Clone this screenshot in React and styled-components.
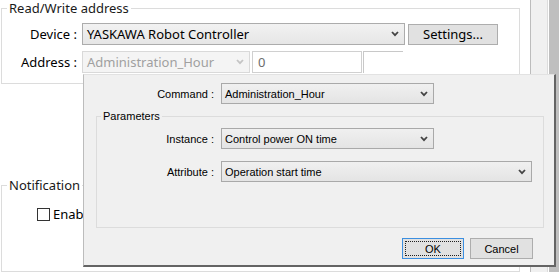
import styled, { createGlobalStyle } from 'styled-components';

const GlobalStyle = createGlobalStyle`
  html, body {
    margin: 0;
    padding: 0;
    background: #ffffff;
  }
  * {
    box-sizing: border-box;
  }
`;

const Screen = styled.div`
  position: relative;
  width: 559px;
  height: 272px;
  overflow: hidden;
  display: flex;
  background: #ffffff;
  font-family: 'Noto Sans', 'Open Sans', sans-serif;
  font-size: 12px;
  color: #000;
`;

const Form = styled.div`
  width: 531px;
  flex: none;
  padding-left: 1px;
  border-right: 1px solid #bcbcbc;
  display: flex;
  flex-direction: column;
`;

const Gutter = styled.div`
  width: 17px;
  flex: none;
  background: #f0f0f0;
  border-right: 1px solid #dcdcdc;
  margin-right: 1px;
`;

const Edge = styled.div`
  flex: 1;
  background: #bfbfbf;
`;

const Group = styled.fieldset`
  margin: ${(p) => p.$top || 0}px 0 0 0;
  width: 519px;
  padding: 0 0 ${(p) => p.$bottom || 0}px 0;
  border: 1px solid #dcdcdc;
  flex: ${(p) => (p.$grow ? 1 : 'none')};
  min-width: 0;
`;

const Legend = styled.legend`
  margin-left: 5px;
  padding: 0 2px;
  font-size: 13px;
  line-height: 16px;
  color: #1a1a1a;
`;

const Rows = styled.div`
  display: flex;
  flex-direction: column;
  gap: 6px;
  padding-top: ${(p) => p.$top}px;
`;

const Row = styled.div`
  display: flex;
  align-items: center;
`;

const Label = styled.div`
  width: ${(p) => p.$w}px;
  flex: none;
  text-align: right;
  font-size: 13px;
  margin-right: 5px;
  white-space: nowrap;
`;

const Combo = styled.div`
  width: ${(p) => p.$w}px;
  height: 22px;
  flex: none;
  display: flex;
  align-items: center;
  justify-content: space-between;
  padding: 0 5px 0 4px;
  border: 1px solid ${(p) => (p.$disabled ? '#d9d9d9' : '#acacac')};
  background: ${(p) =>
    p.$disabled ? '#f4f4f4' : 'linear-gradient(#f2f2f2, #e6e6e6)'};
  color: ${(p) => (p.$disabled ? '#a0a0a0' : '#000')};
  font-size: 13px;
  white-space: nowrap;
`;

const Input = styled.div`
  width: ${(p) => p.$w}px;
  height: 22px;
  flex: none;
  display: flex;
  align-items: center;
  padding-left: 5px;
  border: 1px solid #d0d0d0;
  background: #fff;
  color: #6d6d6d;
  font-size: 13px;
  margin-left: ${(p) => p.$ml || 0}px;
`;

const OpenBox = styled.div`
  width: 40px;
  height: 22px;
  flex: none;
  margin-left: 1px;
  border-top: 1px solid #c8c8c8;
  border-left: 1px solid #c8c8c8;
  background: #fff;
`;

const Button = styled.div`
  width: ${(p) => p.$w}px;
  height: 21px;
  flex: none;
  display: flex;
  align-items: center;
  justify-content: center;
  margin-left: ${(p) => p.$ml || 0}px;
  border: 1px solid ${(p) => (p.$focus ? '#3c8fe0' : '#adadad')};
  background: #e1e1e1;
  font-size: ${(p) => p.$size || 11}px;
  position: relative;
  ${(p) =>
    p.$focus &&
    `&::after {
      content: '';
      position: absolute;
      inset: 2px;
      border: 1px dotted #202020;
    }`}
`;

const CheckRow = styled.div`
  display: flex;
  align-items: center;
  padding: 12px 0 0 35px;
  font-size: 13px;
`;

const Box = styled.span`
  width: 13px;
  height: 13px;
  border: 1px solid #333;
  background: #fff;
  margin-right: 3px;
`;

const Dialog = styled.div`
  position: absolute;
  left: 83px;
  top: 74px;
  width: 473px;
  height: 193px;
  background: #f0f0f0;
  border-top: 1px solid #e2e2e2;
  border-left: 1px solid #bcbcbc;
  border-right: 2px solid #646464;
  border-bottom: 2px solid #646464;
  font-family: 'Liberation Sans', Arial, sans-serif;
  font-size: 11px;
  padding-top: 8px;
  display: flex;
  flex-direction: column;
`;

const DRow = styled.div`
  display: flex;
  align-items: center;
  margin-top: ${(p) => p.$top || 0}px;
`;

const DLabel = styled.div`
  width: ${(p) => p.$w}px;
  flex: none;
  text-align: right;
  margin-right: 7px;
  white-space: nowrap;
`;

const DCombo = styled.div`
  width: ${(p) => p.$w}px;
  height: 21px;
  flex: none;
  display: flex;
  align-items: center;
  justify-content: space-between;
  padding: 0 5px 0 3px;
  border: 1px solid #a9a9a9;
  background: linear-gradient(#f0f0f0, #e4e4e4);
  white-space: nowrap;
`;

const Params = styled.fieldset`
  margin: 5px 0 0 12px;
  width: 448px;
  height: 119px;
  padding: 5px 0 0 0;
  border: 1px solid #dcdcdc;
  min-width: 0;
`;

const PLegend = styled.legend`
  margin-left: 4px;
  padding: 0 2px;
  line-height: 14px;
`;

const Actions = styled.div`
  display: flex;
  justify-content: flex-end;
  padding-right: 21px;
  margin-top: 10px;
`;

const Chevron = ({ color = '#444' }) => (
  <svg width="8" height="6" viewBox="0 0 8 6">
    <path d="M1 1 L4 4.2 L7 1" fill="none" stroke={color} strokeWidth="1.8" />
  </svg>
);

export default function App() {
  return (
    <>
      <GlobalStyle />
      <Screen>
        <Form>
          <Group $bottom={10}>
            <Legend>Read/Write address</Legend>
            <Rows $top={7}>
              <Row>
                <Label $w={75}>Device :</Label>
                <Combo $w={323}>
                  YASKAWA Robot Controller
                  <Chevron />
                </Combo>
                <Button $w={90} $ml={3} $size={13}>
                  Settings...
                </Button>
              </Row>
              <Row>
                <Label $w={75}>Address :</Label>
                <Combo $w={168} $disabled>
                  Administration_Hour
                  <Chevron color="#c4c4c4" />
                </Combo>
                <Input $w={110} $ml={2}>0</Input>
                <OpenBox />
              </Row>
            </Rows>
          </Group>
          <Group $top={93} $grow>
            <Legend>Notification</Legend>
            <CheckRow>
              <Box />
              Enable notification
            </CheckRow>
          </Group>
        </Form>
        <Gutter />
        <Edge />
        <Dialog>
          <DRow>
            <DLabel $w={130}>Command :</DLabel>
            <DCombo $w={213}>
              Administration_Hour
              <Chevron />
            </DCombo>
          </DRow>
          <Params>
            <PLegend>Parameters</PLegend>
            <DRow>
              <DLabel $w={117}>Instance :</DLabel>
              <DCombo $w={213}>
                Control power ON time
                <Chevron />
              </DCombo>
            </DRow>
            <DRow $top={12}>
              <DLabel $w={117}>Attribute :</DLabel>
              <DCombo $w={311}>
                Operation start time
                <Chevron />
              </DCombo>
            </DRow>
          </Params>
          <Actions>
            <Button $w={62} $focus>OK</Button>
            <Button $w={63} $ml={6}>Cancel</Button>
          </Actions>
        </Dialog>
      </Screen>
    </>
  );
}
